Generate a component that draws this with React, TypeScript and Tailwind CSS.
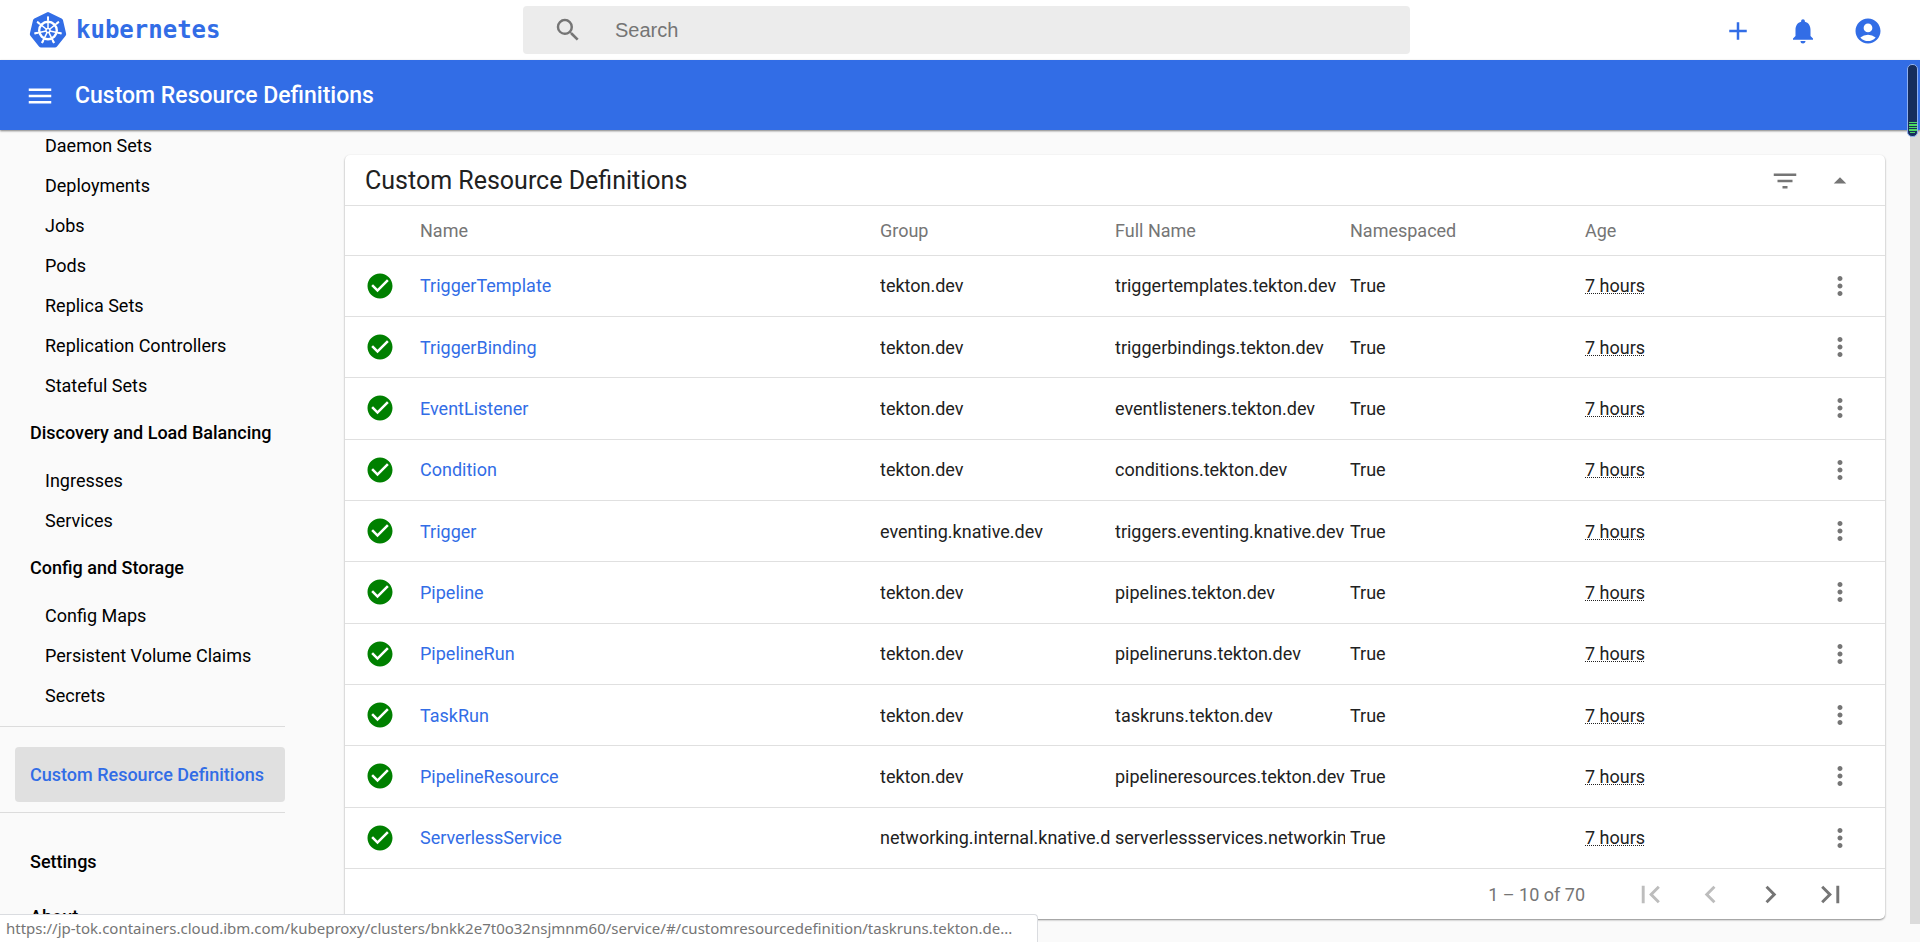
import React from "react";
import {
  MdAdd,
  MdArrowDropUp,
  MdCheckCircle,
  MdChevronLeft,
  MdChevronRight,
  MdFilterList,
  MdFirstPage,
  MdLastPage,
  MdMenu,
  MdMoreVert,
  MdNotifications,
  MdAccountCircle,
  MdSearch,
} from "react-icons/md";

type Resource = { name: string; group: string; fullName: string };

const resources: Resource[] = [
  { name: "TriggerTemplate", group: "tekton.dev", fullName: "triggertemplates.tekton.dev" },
  { name: "TriggerBinding", group: "tekton.dev", fullName: "triggerbindings.tekton.dev" },
  { name: "EventListener", group: "tekton.dev", fullName: "eventlisteners.tekton.dev" },
  { name: "Condition", group: "tekton.dev", fullName: "conditions.tekton.dev" },
  { name: "Trigger", group: "eventing.knative.dev", fullName: "triggers.eventing.knative.dev" },
  { name: "Pipeline", group: "tekton.dev", fullName: "pipelines.tekton.dev" },
  { name: "PipelineRun", group: "tekton.dev", fullName: "pipelineruns.tekton.dev" },
  { name: "TaskRun", group: "tekton.dev", fullName: "taskruns.tekton.dev" },
  { name: "PipelineResource", group: "tekton.dev", fullName: "pipelineresources.tekton.dev" },
  {
    name: "ServerlessService",
    group: "networking.internal.knative.dev",
    fullName: "serverlessservices.networking.internal.knative.dev",
  },
];

function Logo() {
  const spokes = [0, 1, 2, 3, 4, 5, 6];
  return (
    <svg viewBox="0 0 38 38" className="size-[38px]" aria-hidden="true">
      <path
        d="M17.8.8a2.6 2.6 0 0 1 2.4 0l12.4 6a2.6 2.6 0 0 1 1.4 1.8l3.1 13.3a2.6 2.6 0 0 1-.5 2.2L28 34.900a2.600 2.600 0 0 1-2 1H12a2.600 2.600 0 0 1-2-1L1.400 24.100a2.600 2.600 0 0 1-.5-2.200L4 8.600a2.600 2.600 0 0 1 1.400-1.800z"
        transform="translate(0 .6)"
        fill="#326de6"
      />
      <g stroke="#fff" fill="none">
        <circle cx="19" cy="19.500" r="8.800" strokeWidth="2.400" />
        {spokes.map((i) => (
          <g key={i} transform={`rotate(${(i * 360) / 7} 19 19.500)`}>
            <path d="M19 17.500V5.800" strokeWidth="1.500" />
            <path d="M19 9V5.600" strokeWidth="2" />
          </g>
        ))}
        <circle cx="19" cy="19.500" r="2" strokeWidth="1.500" />
      </g>
    </svg>
  );
}

function SideItem({ children }: { children: string }) {
  return (
    <a href="#" className="flex h-10 items-center pl-[45px]">
      {children}
    </a>
  );
}

function SideHeading({ children }: { children: string }) {
  return (
    <a href="#" className="flex h-[55px] items-center pl-[30px] font-medium">
      {children}
    </a>
  );
}

function Sidebar() {
  return (
    <nav className="w-[285px] shrink-0 overflow-hidden text-[18px] text-black">
      <div className="-mt-[5px]">
        <SideItem>Daemon Sets</SideItem>
        <SideItem>Deployments</SideItem>
        <SideItem>Jobs</SideItem>
        <SideItem>Pods</SideItem>
        <SideItem>Replica Sets</SideItem>
        <SideItem>Replication Controllers</SideItem>
        <SideItem>Stateful Sets</SideItem>
        <SideHeading>Discovery and Load Balancing</SideHeading>
        <SideItem>Ingresses</SideItem>
        <SideItem>Services</SideItem>
        <SideHeading>Config and Storage</SideHeading>
        <SideItem>Config Maps</SideItem>
        <SideItem>Persistent Volume Claims</SideItem>
        <SideItem>Secrets</SideItem>
      </div>
      <div className="mt-[11px] border-y border-[#dcdcdc] pt-5 pb-[10px] pl-[15px]">
        <a
          href="#"
          className="flex h-[55px] items-center rounded-sm bg-[#e0e0e0] pl-[15px] font-medium text-[#326de6]"
        >
          Custom Resource Definitions
        </a>
      </div>
      <div className="pt-[21px]">
        <SideHeading>Settings</SideHeading>
        <SideHeading>About</SideHeading>
      </div>
    </nav>
  );
}

const pagerButton = "flex size-[60px] items-center justify-center text-[#757575] disabled:text-[#bdbdbd]";

export default function App() {
  return (
    <div className="flex h-screen flex-col overflow-hidden bg-[#fafafa] font-['Roboto',sans-serif] text-[18px] text-[#212121]">
      <header className="grid h-[60px] shrink-0 grid-cols-[523px_1fr_510px] items-center bg-white">
        <a href="#" className="flex items-center gap-[9px] pl-[29px] text-[#326de6]">
          <Logo />
          <span className="font-['DejaVu_Sans_Mono',monospace] text-[24px] font-bold">kubernetes</span>
        </a>
        <label className="flex h-12 items-center rounded-sm bg-[#ececec] pl-[30px] text-[#757575]">
          <MdSearch className="size-[30px]" aria-hidden="true" />
          <input
            type="text"
            placeholder="Search"
            aria-label="Search"
            className="ml-8 min-w-0 flex-1 bg-transparent font-['Liberation_Sans',sans-serif] text-[20px] outline-none placeholder:text-[#757575]"
          />
        </label>
        <div className="flex items-center justify-end gap-[35px] pt-px pr-[37px] text-[#326de6]">
          <button type="button" aria-label="Create">
            <MdAdd className="size-[30px]" />
          </button>
          <button type="button" aria-label="Notifications">
            <MdNotifications className="size-[30px]" />
          </button>
          <button type="button" aria-label="Account">
            <MdAccountCircle className="size-[30px]" />
          </button>
        </div>
      </header>

      <div className="z-10 flex h-[70px] shrink-0 items-center gap-5 bg-[#326de6] pt-[2px] pl-[25px] text-white shadow-[0_1px_2px_rgba(0,0,0,0.5)]">
        <button type="button" aria-label="Toggle navigation">
          <MdMenu className="size-[30px]" />
        </button>
        <span className="text-[23px] font-medium">Custom Resource Definitions</span>
      </div>

      <div className="flex min-h-0 flex-1">
        <Sidebar />
        <main className="min-w-0 flex-1 overflow-hidden pt-[25px] pr-[25px] pl-[60px]">
          <section className="rounded-[5px] bg-white shadow-[0_1px_2px_rgba(0,0,0,0.45)]">
            <div className="flex h-[51px] items-center border-b border-[#e0e0e0] pt-px pr-[30px] pl-5">
              <h1 className="flex-1 text-[25px]">Custom Resource Definitions</h1>
              <button type="button" aria-label="Filter" className="text-[#757575]">
                <MdFilterList className="size-[30px]" />
              </button>
              <button type="button" aria-label="Collapse" className="ml-[25px] text-[#757575]">
                <MdArrowDropUp className="size-[30px]" />
              </button>
            </div>
            <table className="h-[663px] w-full table-fixed border-collapse text-left">
              <colgroup>
                <col className="w-[75px]" />
                <col />
                <col className="w-[235px]" />
                <col className="w-[235px]" />
                <col className="w-[235px]" />
                <col className="w-[235px]" />
                <col className="w-[65px]" />
              </colgroup>
              <thead>
                <tr className="h-[49px] border-b border-[#e0e0e0] text-[#757575]">
                  <td />
                  <th className="font-normal">Name</th>
                  <th className="font-normal">Group</th>
                  <th className="font-normal">Full Name</th>
                  <th className="font-normal">Namespaced</th>
                  <th className="font-normal">Age</th>
                  <td />
                </tr>
              </thead>
              <tbody>
                {resources.map((r) => (
                  <tr key={r.name} className="border-b border-[#e0e0e0]">
                    <td className="pl-5">
                      <MdCheckCircle className="size-[30px] text-[#008000]" aria-label="Ready" />
                    </td>
                    <td>
                      <a href="#" className="text-[#326de6]">
                        {r.name}
                      </a>
                    </td>
                    <td className="pr-[5px]">
                      <div className="overflow-hidden whitespace-nowrap">{r.group}</div>
                    </td>
                    <td className="pr-[5px]">
                      <div className="overflow-hidden whitespace-nowrap">{r.fullName}</div>
                    </td>
                    <td>True</td>
                    <td>
                      <span className="underline decoration-dotted decoration-1">7 hours</span>
                    </td>
                    <td className="pl-[5px]">
                      <button type="button" aria-label={`Actions for ${r.name}`} className="block text-[#757575]">
                        <MdMoreVert className="size-[30px]" />
                      </button>
                    </td>
                  </tr>
                ))}
              </tbody>
            </table>
            <div className="flex h-[50px] items-center justify-end pr-[25px] text-[#757575]">
              <span className="mr-[35px]">1 – 10 of 70</span>
              <button type="button" aria-label="First page" disabled className={pagerButton}>
                <MdFirstPage className="size-[35px]" />
              </button>
              <button type="button" aria-label="Previous page" disabled className={pagerButton}>
                <MdChevronLeft className="size-[35px]" />
              </button>
              <button type="button" aria-label="Next page" className={pagerButton}>
                <MdChevronRight className="size-[35px]" />
              </button>
              <button type="button" aria-label="Last page" className={pagerButton}>
                <MdLastPage className="size-[35px]" />
              </button>
            </div>
          </section>
        </main>
        <div className="mb-[18px] w-[10px] shrink-0 bg-[#dbdbdb]" />
      </div>

      <div className="absolute top-16 right-[2px] z-20 flex h-[73px] w-[11px] flex-col items-center justify-end gap-px rounded-[5px] border border-[#8fb0f0] bg-[#162d5c] pb-[3px]">
        <span className="h-px w-2 bg-[#4cd964]" />
        <span className="h-[2px] w-2 bg-[#4cd964]" />
        <span className="h-px w-2 bg-[#4cd964]" />
        <span className="h-[2px] w-2 bg-[#4cd964]" />
        <span className="h-px w-[5px] bg-[#4cd964]" />
      </div>

      <div className="absolute bottom-0 left-0 z-20 h-7 min-w-[1038px] rounded-tr border-t border-r border-[#dadce0] bg-white pr-2 pl-[6px] font-['Noto_Sans',sans-serif] text-[15px] leading-[27px] whitespace-nowrap text-[#757575]">
        https://jp-tok.containers.cloud.ibm.com/kubeproxy/clusters/bnkk2e7t0o32nsjmnm60/service/#/customresourcedefinition/taskruns.tekton.de...
      </div>
    </div>
  );
}
